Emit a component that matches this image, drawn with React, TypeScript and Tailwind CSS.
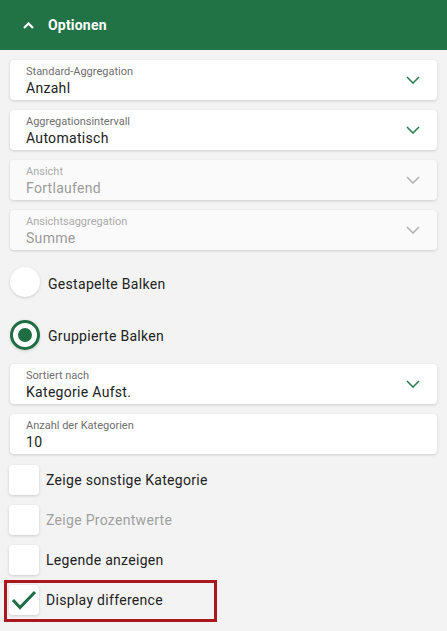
import React from "react";

const Chevron = ({ disabled }: { disabled?: boolean }) => (
  <svg width="14" height="8" viewBox="0 0 14 8" className="shrink-0">
    <polyline
      points="1,1 7,7 13,1"
      fill="none"
      stroke={disabled ? "#b3b3b3" : "#2a7f50"}
      strokeWidth="1.6"
    />
  </svg>
);

const SelectCard = ({
  label,
  value,
  disabled,
  arrow = true,
}: {
  label: string;
  value: string;
  disabled?: boolean;
  arrow?: boolean;
}) => (
  <div
    className={`h-10 rounded-[4px] shadow-[0_1px_3px_rgba(0,0,0,0.16)] flex items-center pl-4 pr-[17px] ${
      disabled ? "bg-[#fafafa]" : "bg-white"
    }`}
  >
    <div className="flex-1 flex flex-col pt-[3px]">
      <span
        className={`text-[11px] leading-[12px] ${
          disabled ? "text-[#aaaaaa]" : "text-[#6f6f6f]"
        }`}
      >
        {label}
      </span>
      <span
        className={`mt-[1px] text-[14px] leading-[18px] tracking-[0.3px] ${
          disabled ? "text-[#9c9c9c]" : "text-[#222222]"
        }`}
      >
        {value}
      </span>
    </div>
    {arrow && <Chevron disabled={disabled} />}
  </div>
);

const Checkbox = ({
  label,
  checked,
  disabled,
}: {
  label: string;
  checked?: boolean;
  disabled?: boolean;
}) => (
  <div className="flex items-center h-[30px] -ml-px">
    <div className="w-[30px] h-[30px] rounded-[4px] bg-white shadow-[0_1px_3px_rgba(0,0,0,0.16)] flex items-center justify-center">
      {checked && (
        <svg width="30" height="30" viewBox="0 0 30 30">
          <polyline
            points="4,15 11,22.5 26,7"
            fill="none"
            stroke="#1f6e43"
            strokeWidth="3"
          />
        </svg>
      )}
    </div>
    <span
      className={`ml-[7px] text-[14px] tracking-[0.3px] ${
        disabled ? "text-[#a0a0a0]" : "text-[#222222]"
      }`}
    >
      {label}
    </span>
  </div>
);

export default function App() {
  return (
    <div className="w-[447px] h-[631px] bg-[#f3f3f3] overflow-hidden font-['Roboto','Liberation_Sans',sans-serif]">
      <div className="h-[50px] bg-[#217346] flex items-center pl-[23px]">
        <svg width="11" height="7" viewBox="0 0 11 7">
          <polyline
            points="1,6 5.5,1.5 10,6"
            fill="none"
            stroke="white"
            strokeWidth="2.2"
          />
        </svg>
        <span className="ml-[14px] text-white font-bold text-[14px] tracking-[0.2px]">
          Optionen
        </span>
      </div>
      <div className="px-2.5 pt-2.5 flex flex-col">
        <div className="flex flex-col gap-2.5">
          <SelectCard label="Standard-Aggregation" value="Anzahl" />
          <SelectCard label="Aggregationsintervall" value="Automatisch" />
          <SelectCard label="Ansicht" value="Fortlaufend" disabled />
          <SelectCard label="Ansichtsaggregation" value="Summe" disabled />
        </div>
        <div className="mt-[17px] flex items-center h-[30px]">
          <div className="w-[30px] h-[30px] rounded-full bg-white shadow-[0_1px_3px_rgba(0,0,0,0.16)]" />
          <span className="ml-[8px] pt-[5px] text-[14px] tracking-[0.3px] text-[#222222]">
            Gestapelte Balken
          </span>
        </div>
        <div className="mt-[23px] flex items-center h-[30px]">
          <div className="w-[30px] h-[30px] rounded-full bg-white border-[3px] border-[#1f6e43] shadow-[0_1px_3px_rgba(0,0,0,0.16)] flex items-center justify-center">
            <div className="w-[14px] h-[14px] rounded-full bg-[#1f6e43]" />
          </div>
          <span className="ml-[8px] pt-[3px] text-[14px] tracking-[0.3px] text-[#222222]">
            Gruppierte Balken
          </span>
        </div>
        <div className="mt-[14px] flex flex-col gap-2.5">
          <SelectCard label="Sortiert nach" value="Kategorie Aufst." />
          <SelectCard label="Anzahl der Kategorien" value="10" arrow={false} />
        </div>
        <div className="mt-[11px] flex flex-col gap-2.5">
          <Checkbox label="Zeige sonstige Kategorie" />
          <Checkbox label="Zeige Prozentwerte" disabled />
          <Checkbox label="Legende anzeigen" />
          <div className="relative">
            <Checkbox label="Display difference" checked />
            <div className="absolute left-[-6px] top-[-5px] w-[213px] h-[42px] border-[3px] border-[#a8181c]" />
          </div>
        </div>
      </div>
    </div>
  );
}
